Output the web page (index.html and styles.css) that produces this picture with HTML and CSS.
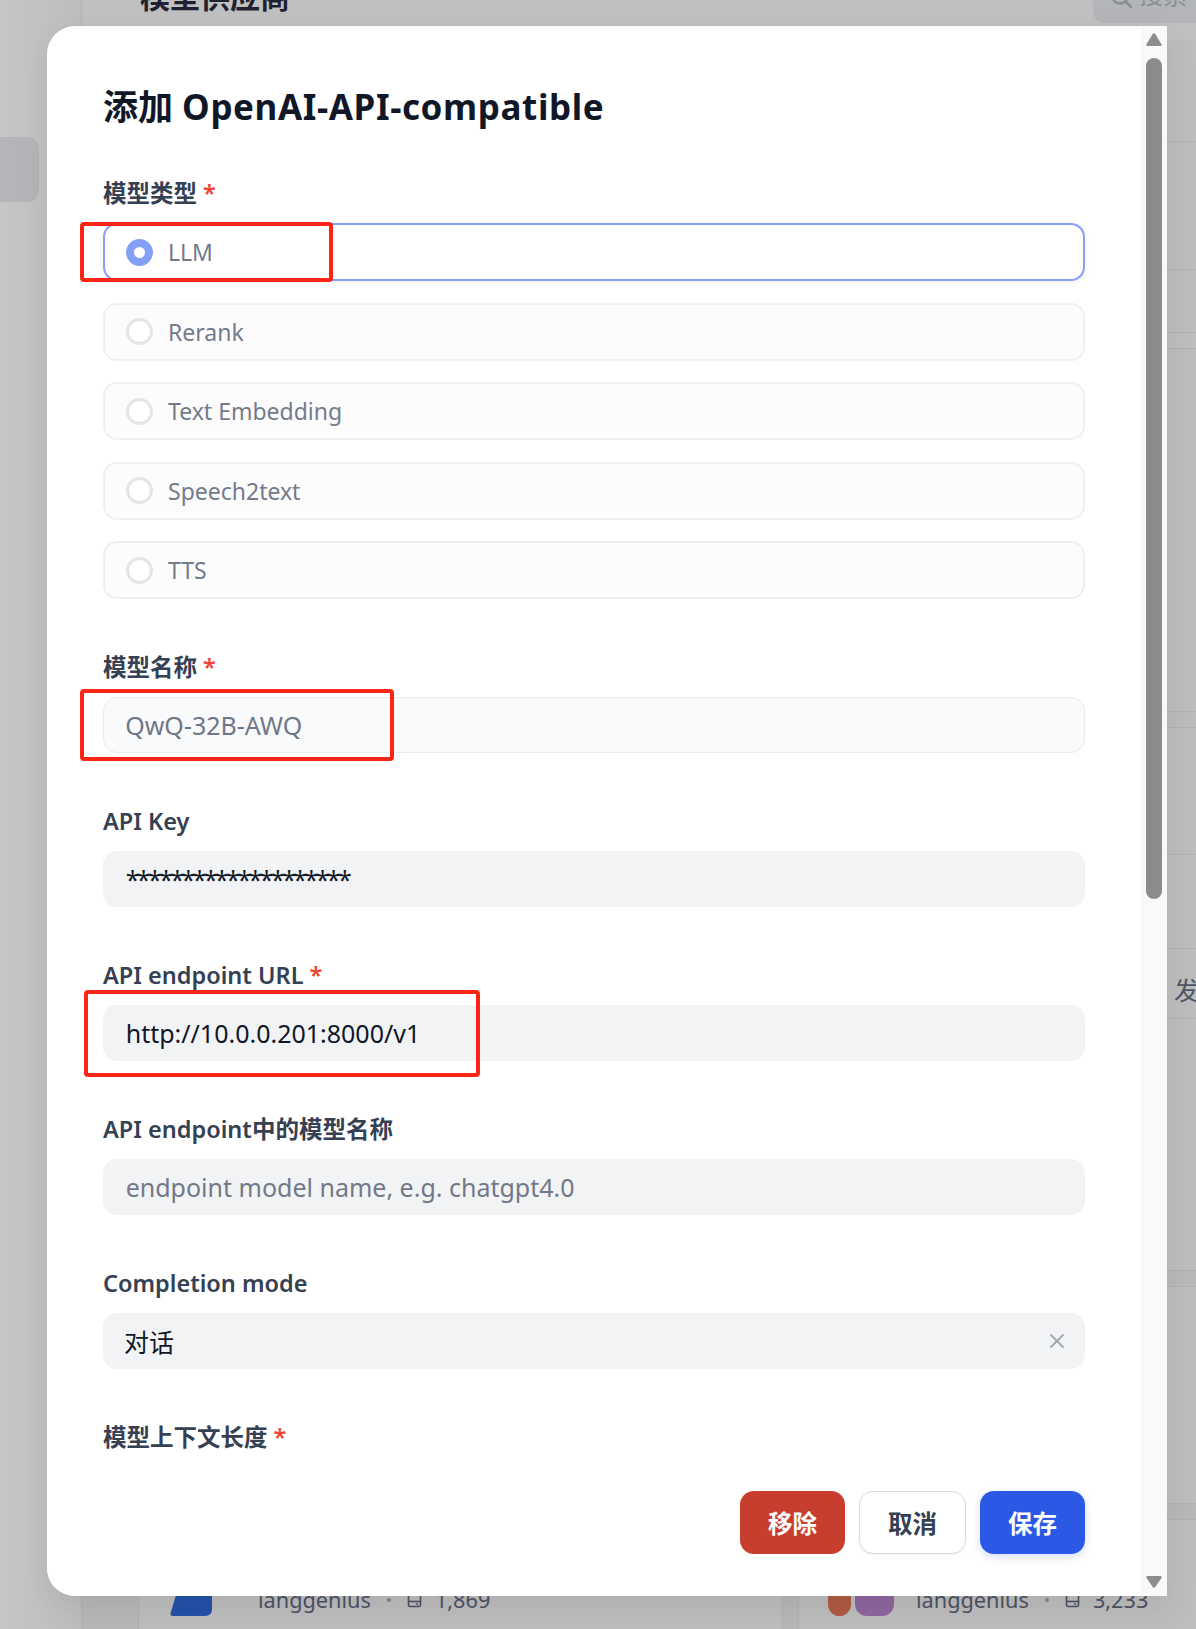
FILE: index.html
```html
<!DOCTYPE html>
<html lang="zh-CN">
<head>
<meta charset="utf-8">
<title>添加 OpenAI-API-compatible</title>
<link rel="stylesheet" href="styles.css">
</head>
<body>
<div class="app">
  <aside class="sidebar"><div class="side-item"></div></aside>
  <main class="main">
    <header class="main-head">
      <h1 class="page-title">模型供应商</h1>
      <div class="search">
        <svg class="search-icon" width="24" height="24" viewBox="0 0 24 24" fill="none" stroke="#8a8e96" stroke-width="2.6" stroke-linecap="round"><circle cx="10" cy="10" r="7.5"/><line x1="15.5" y1="15.5" x2="21" y2="21"/></svg>
        <span>搜索</span>
      </div>
    </header>
    <div class="columns">
      <div class="col">
        <div class="card card-fill"></div>
        <div class="card card-bottom">
          <div class="plugin-row">
            <div class="plugin-icon">
              <svg width="44" height="44" viewBox="0 0 44 44"><path d="M13 0 H42 V37 Q42 44 35 44 H3 Q0 44 0.6 41 Z" fill="#2451a8"/></svg>
            </div>
            <div class="meta">
              <span class="org">langgenius</span>
              <span class="sep"></span>
              <svg class="db" width="15" height="16" viewBox="0 0 15 16" fill="none" stroke="#4d5364" stroke-width="1.6"><rect x="1.5" y="1.5" width="12" height="13" rx="1.5"/><line x1="1.5" y1="9.5" x2="13.5" y2="9.5"/><line x1="9" y1="12" x2="11" y2="12"/></svg>
              <span class="num">1,869</span>
            </div>
          </div>
        </div>
      </div>
      <div class="col">
        <div class="card card-a">
          <div class="sec sec-a1"></div>
          <div class="sec sec-a2"></div>
          <div class="sec sec-a3"></div>
        </div>
        <div class="card card-b"></div>
        <div class="card card-c">
          <div class="sec sec-c1"></div>
          <div class="sec sec-c2"></div>
          <div class="sec sec-c3"><span class="side-text">发布</span></div>
          <div class="sec sec-c4"></div>
        </div>
        <div class="card card-d"></div>
        <div class="card card-e">
          <div class="plugin-row plugin-row-r">
            <div class="plugin-icon">
              <span class="blob blob-o"></span>
              <span class="blob blob-p"></span>
            </div>
            <div class="meta">
              <span class="org">langgenius</span>
              <span class="sep"></span>
              <svg class="db" width="15" height="16" viewBox="0 0 15 16" fill="none" stroke="#4d5364" stroke-width="1.6"><rect x="1.5" y="1.5" width="12" height="13" rx="1.5"/><line x1="1.5" y1="9.5" x2="13.5" y2="9.5"/><line x1="9" y1="12" x2="11" y2="12"/></svg>
              <span class="num">3,233</span>
            </div>
          </div>
        </div>
      </div>
    </div>
  </main>
</div>

<div class="modal">
  <div class="modal-main">
    <div class="modal-body">
      <h2 class="modal-title">添加 <span class="title-latin">OpenAI-API-compatible</span></h2>

      <div class="field field-first">
        <div class="label">模型类型<span class="req">*</span></div>
        <div class="radio-list">
          <div class="radio radio-on"><span class="dot"></span>LLM</div>
          <div class="radio"><span class="dot"></span>Rerank</div>
          <div class="radio"><span class="dot"></span>Text Embedding</div>
          <div class="radio"><span class="dot"></span>Speech2text</div>
          <div class="radio"><span class="dot"></span>TTS</div>
        </div>
      </div>

      <div class="field">
        <div class="label">模型名称<span class="req">*</span></div>
        <div class="input input-disabled">QwQ-32B-AWQ</div>
      </div>

      <div class="field">
        <div class="label">API Key</div>
        <div class="input input-stars">********************</div>
      </div>

      <div class="field">
        <div class="label">API endpoint URL<span class="req">*</span></div>
        <div class="input">http://10.0.0.201:8000/v1</div>
      </div>

      <div class="field">
        <div class="label">API endpoint中的模型名称</div>
        <div class="input input-ph">endpoint model name, e.g. chatgpt4.0</div>
      </div>

      <div class="field">
        <div class="label">Completion mode</div>
        <div class="input input-select">
          <span>对话</span>
          <svg class="clear" width="16" height="16" viewBox="0 0 16 16" fill="none" stroke="#a2a6ae" stroke-width="1.8" stroke-linecap="round"><line x1="2" y1="2" x2="14" y2="14"/><line x1="14" y1="2" x2="2" y2="14"/></svg>
        </div>
      </div>

      <div class="field">
        <div class="label">模型上下文长度<span class="req">*</span></div>
        <div class="input input-ph">4096</div>
      </div>
    </div>
    <div class="modal-foot">
      <button class="btn btn-danger" type="button">移除</button>
      <button class="btn btn-cancel" type="button">取消</button>
      <button class="btn btn-primary" type="button">保存</button>
    </div>
  </div>
  <div class="scrollbar">
    <svg class="sb-arrow" width="16" height="13" viewBox="0 0 16 13"><path d="M6.6 1.2 Q8 -0.6 9.4 1.2 L15.6 11.2 Q16.2 13 14.4 13 H1.6 Q-0.2 13 0.4 11.2 Z" fill="#8d8d8d"/></svg>
    <div class="sb-thumb"></div>
    <div class="sb-space"></div>
    <svg class="sb-arrow" width="16" height="12" viewBox="0 0 16 12"><path d="M1.6 0 H14.4 Q16.2 0 15.6 1.8 L9.4 10.8 Q8 12.6 6.6 10.8 L0.4 1.8 Q-0.2 0 1.6 0 Z" fill="#8d8d8d"/></svg>
  </div>
</div>

<div class="mark mark-1"></div>
<div class="mark mark-2"></div>
<div class="mark mark-3"></div>
</body>
</html>
```

FILE: styles.css
```css
html, body {
  margin: 0;
  padding: 0;
}

body {
  width: 1196px;
  height: 1629px;
  overflow: hidden;
  position: relative;
  background: #bcbcbc;
  font-family: "Noto Sans", "Noto Sans CJK SC", sans-serif;
}

/* ---------- dimmed page behind the dialog ---------- */
.app {
  display: grid;
  grid-template-columns: 82px 1fr;
  height: 1629px;
}

.sidebar {
  box-sizing: border-box;
  padding-top: 137px;
  background: linear-gradient(90deg, #c6c6c6, #bdbdbd);
  border-right: 1px solid #b2b2b2;
}

.side-item {
  width: 39px;
  height: 65px;
  background: #b4b5b8;
  border-radius: 0 12px 12px 0;
}

.main {
  display: flex;
  flex-direction: column;
  min-width: 0;
  overflow: hidden;
  background: linear-gradient(#c0c0c0, #b7b7b7);
}

.main-head {
  flex: none;
  height: 23px;
  display: flex;
  justify-content: space-between;
  align-items: flex-end;
  padding-left: 58px;
}

.page-title {
  margin: 0 0 11px;
  font-size: 30px;
  line-height: 30px;
  font-weight: 700;
  color: #1e2230;
  white-space: nowrap;
}

.search {
  align-self: stretch;
  box-sizing: border-box;
  width: 120px;
  margin-right: -17px;
  padding: 0 0 16px 17px;
  display: flex;
  align-items: flex-end;
  gap: 5px;
  background: #b4b5b8;
  border-radius: 0 0 0 12px;
  color: #8a8e96;
  font-size: 24px;
  line-height: 24px;
}

.search-icon {
  flex: none;
  margin-bottom: -3px;
}

.columns {
  flex: 1;
  min-height: 0;
  margin-top: 17px;
  margin-bottom: -40px;
  padding-left: 56px;
  display: grid;
  grid-template-columns: 645px 645px;
  gap: 15px;
}

.col {
  display: flex;
  flex-direction: column;
  gap: 15px;
  min-height: 0;
}

.card {
  box-sizing: border-box;
  background: #bdbdbd;
  border: 1px solid #b1b1b1;
  border-radius: 14px;
  flex: none;
}

.card-fill { flex: 1; }

.card-bottom,
.card-e {
  display: flex;
  align-items: flex-end;
  padding-bottom: 52px;
}

.card-bottom { height: 240px; }
.card-e { flex: 1; }

.card-a {
  height: 293px;
  border-top-color: transparent;
  display: flex;
  flex-direction: column;
}
.card-b { height: 364px; }
.card-c {
  height: 544px;
  display: flex;
  flex-direction: column;
}
.card-d { height: 218px; }

.sec {
  box-sizing: border-box;
  flex: none;
  border-top: 1px solid #b1b1b1;
}
.sec-a1 { height: 100px; border-top: 0; }
.sec-a2 { height: 128px; }
.sec-a3 { flex: 1; }
.sec-c1 { height: 126px; border-top: 0; }
.sec-c2 { height: 94px; }
.sec-c3 {
  height: 70px;
  padding: 10px 0 0 375px;
  display: flex;
  align-items: center;
}
.sec-c4 { flex: 1; }

.side-text {
  font-size: 25px;
  color: #4f5666;
  white-space: nowrap;
}

.plugin-row {
  height: 44px;
  display: flex;
  align-items: center;
  padding-left: 31px;
}
.plugin-row-r { padding-left: 29px; }

.plugin-icon {
  flex: none;
  width: 88px;
  height: 44px;
  display: flex;
  align-items: flex-end;
}

.blob {
  display: block;
  height: 36px;
  border-radius: 12px;
}
.blob-o { width: 23px; background: #b05b44; }
.blob-p { width: 39px; margin-left: 4px; background: #8f669f; }

.meta {
  display: flex;
  align-items: center;
  padding-top: 12px;
  font-size: 21.7px;
  line-height: 30px;
  color: #4d5364;
  white-space: nowrap;
}

.sep {
  width: 4px;
  height: 4px;
  margin: 0 16px;
  border-radius: 50%;
  background: #80869a;
}

.db { flex: none; margin-right: 13px; }

/* ---------- dialog ---------- */
.modal {
  position: absolute;
  left: 47px;
  top: 26px;
  width: 1120px;
  height: 1570px;
  display: grid;
  grid-template-columns: 1fr 26px;
  background: #fff;
  border-radius: 28px 0 0 28px;
  overflow: hidden;
  box-shadow: 0 12px 32px rgba(0, 0, 0, 0.08);
}

.modal-main {
  display: flex;
  flex-direction: column;
  min-height: 0;
  overflow: hidden;
}

.modal-body {
  flex: 1;
  min-height: 0;
  overflow: hidden;
  padding: 56px 56px 0;
}

.modal-title {
  margin: 0;
  font-size: 35px;
  line-height: 49px;
  font-weight: 700;
  color: #101828;
  white-space: nowrap;
}

.title-latin { letter-spacing: 0.6px; }

.field { margin-top: 51px; }
.field-first { margin-top: 45px; }

.label {
  height: 35px;
  margin-bottom: 12px;
  font-size: 23.5px;
  line-height: 35px;
  font-weight: 600;
  color: #354052;
  white-space: nowrap;
}

.req {
  margin-left: 6px;
  color: #f04438;
}

.radio-list {
  display: flex;
  flex-direction: column;
  gap: 21.5px;
}

.radio {
  box-sizing: border-box;
  height: 58px;
  padding-left: 21px;
  display: flex;
  align-items: center;
  border: 2px solid #eff0f3;
  border-radius: 14px;
  background: #fcfcfd;
  font-size: 23px;
  color: #737b8b;
}

.radio-on {
  border-color: #86a2f5;
  background: #fff;
  box-shadow: 0 2px 6px rgba(16, 24, 40, 0.06);
}

.dot {
  flex: none;
  box-sizing: border-box;
  width: 27px;
  height: 27px;
  margin-right: 15px;
  border: 3px solid #e3e5e9;
  border-radius: 50%;
  background: #fff;
}

.radio-on .dot { border: 8px solid #84a0f4; }

.input {
  box-sizing: border-box;
  height: 56px;
  padding: 0 20px 0 22.7px;
  display: flex;
  align-items: center;
  border-radius: 14px;
  background: #f2f3f5;
  font-size: 25px;
  color: #101828;
  white-space: nowrap;
}

.input-disabled {
  padding-left: 21.2px;
  background: #f9fafb;
  border: 1.5px solid #e9ebef;
  color: #6f7787;
}

.input-stars { letter-spacing: -2.6px; }

.input-ph { color: #717989; }

.input-select {
  justify-content: space-between;
  padding-left: 21px;
}

.clear { flex: none; }

.modal-foot {
  flex: none;
  display: flex;
  justify-content: flex-end;
  gap: 14px;
  padding: 36px 56px 42px;
  background: #fff;
}

.btn {
  box-sizing: border-box;
  height: 63px;
  padding: 0 27px;
  display: flex;
  align-items: center;
  border: 1px solid transparent;
  border-radius: 14px;
  font-family: "Noto Sans CJK SC", "Noto Sans", sans-serif;
  font-size: 24.5px;
  font-weight: 700;
  cursor: pointer;
}

.btn-danger { background: #c83e2e; color: #fff; }
.btn-cancel {
  padding: 0 28px;
  background: #fff;
  border-color: #d9dbe0;
  color: #354052;
  box-shadow: 0 1px 3px rgba(16, 24, 40, 0.05);
}
.btn-primary {
  background: #2b59e6;
  color: #fff;
  box-shadow: 0 3px 8px rgba(43, 89, 230, 0.2);
}

.scrollbar {
  display: flex;
  flex-direction: column;
  align-items: center;
  padding: 7px 0 8px;
  background: #f9f9f9;
}

.sb-arrow { flex: none; }

.sb-thumb {
  flex: none;
  width: 16px;
  height: 841px;
  margin-top: 12px;
  border-radius: 8px;
  background: #8b8b8b;
}

.sb-space { flex: 1; }

/* ---------- red annotation boxes ---------- */
.mark {
  position: absolute;
  box-sizing: border-box;
  border: 4px solid #ff2516;
  border-radius: 4px;
}
.mark-1 { left: 80px; top: 222px; width: 253px; height: 60px; }
.mark-2 { left: 80px; top: 689px; width: 314px; height: 72px; }
.mark-3 { left: 84px; top: 990px; width: 396px; height: 87px; }
```
